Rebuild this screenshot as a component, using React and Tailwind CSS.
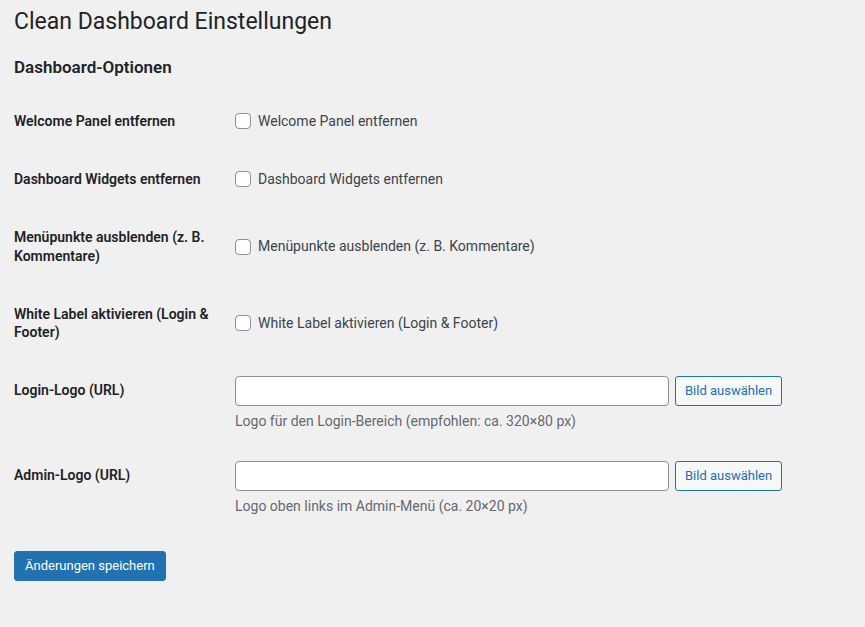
import React, { useState } from "react"

const checkRows = [
  { key: "welcome", label: "Welcome Panel entfernen", text: "Welcome Panel entfernen" },
  { key: "widgets", label: "Dashboard Widgets entfernen", text: "Dashboard Widgets entfernen" },
  { key: "menu", label: "Menüpunkte ausblenden (z. B. Kommentare)", text: "Menüpunkte ausblenden (z. B. Kommentare)" },
  { key: "white", label: "White Label aktivieren (Login & Footer)", text: "White Label aktivieren (Login & Footer)" },
]

const logoRows = [
  { key: "login", label: "Login-Logo (URL)", hint: "Logo für den Login-Bereich (empfohlen: ca. 320×80 px)" },
  { key: "admin", label: "Admin-Logo (URL)", hint: "Logo oben links im Admin-Menü (ca. 20×20 px)" },
]

export default function App() {
  const [checks, setChecks] = useState({})
  const [logos, setLogos] = useState({ login: "", admin: "" })

  return (
    <div className="min-h-screen bg-[#f0f0f1] text-[#3c434a] text-[14px] leading-[1.3] pl-[14px]" style={{ fontFamily: 'Roboto, "Noto Sans", sans-serif' }}>
      <h1 className="text-[23px] font-normal text-[#1d2327] pt-[7px] pb-[4px] leading-[1.3]">Clean Dashboard Einstellungen</h1>
      <h2 className="text-[17px] font-semibold text-[#1d2327] mt-[15px] mb-[14px] leading-[1.3]">Dashboard-Optionen</h2>

      <form onSubmit={e => e.preventDefault()}>
        <div className="grid grid-cols-[210px_1fr]">
          {checkRows.map(r => (
            <React.Fragment key={r.key}>
              <div className="py-5 pr-[10px] font-semibold text-[#1d2327]">{r.label}</div>
              <div className="pl-[11px] flex items-center">
                <label className="flex items-center gap-[7px] cursor-pointer">
                  <input
                    type="checkbox"
                    checked={!!checks[r.key]}
                    onChange={e => setChecks({ ...checks, [r.key]: e.target.checked })}
                    className="appearance-none w-4 h-4 bg-white border border-[#8c8f94] rounded-[4px] checked:bg-[#2271b1]"
                  />
                  <span>{r.text}</span>
                </label>
              </div>
            </React.Fragment>
          ))}

          {logoRows.map(r => (
            <React.Fragment key={r.key}>
              <div className="py-5 pr-[10px] font-semibold text-[#1d2327]">{r.label}</div>
              <div className="pl-[11px] py-[15px]">
                <div className="flex items-center gap-[6px]">
                  <input
                    type="text"
                    value={logos[r.key]}
                    onChange={e => setLogos({ ...logos, [r.key]: e.target.value })}
                    className="w-[434px] h-[30px] bg-white border border-[#8c8f94] rounded-[4px] px-2 outline-none"
                  />
                  <button type="button" className="h-[30px] px-[9px] text-[13px] text-[#2271b1] bg-[#f6f7f7] border border-[#2271b1] rounded-[3px]">
                    Bild auswählen
                  </button>
                </div>
                <p className="text-[14px] text-[#646970] mt-[6px] mb-[1px] leading-[18px]">{r.hint}</p>
              </div>
            </React.Fragment>
          ))}
        </div>

        <div className="pt-5">
          <button type="submit" className="h-[30px] px-[10px] text-[13px] text-white bg-[#2271b1] border border-[#2271b1] rounded-[3px]">
            Änderungen speichern
          </button>
        </div>
      </form>
    </div>
  )
}
